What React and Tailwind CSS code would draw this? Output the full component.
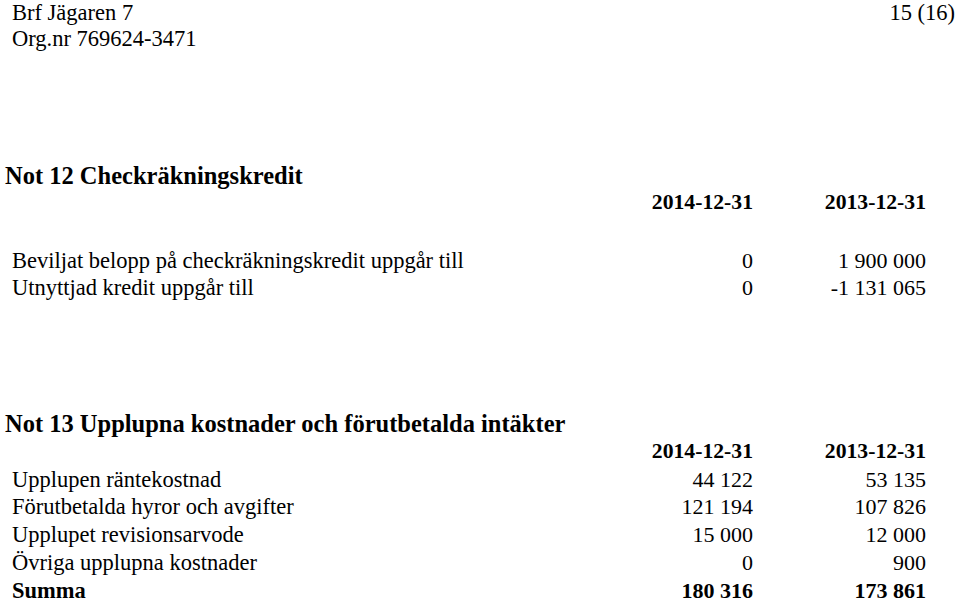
export default function App() {
  const s1 = [
    ["Beviljat belopp på checkräkningskredit uppgår till", "0", "1 900 000"],
    ["Utnyttjad kredit uppgår till", "0", "-1 131 065"],
  ];
  const s2 = [
    ["Upplupen räntekostnad", "44 122", "53 135"],
    ["Förutbetalda hyror och avgifter", "121 194", "107 826"],
    ["Upplupet revisionsarvode", "15 000", "12 000"],
    ["Övriga upplupna kostnader", "0", "900"],
  ];
  return (
    <div className="w-[959px] h-[603px] bg-white text-black overflow-hidden text-[22.5px] font-['Liberation_Serif','Times_New_Roman',serif]">
      <div className="flex justify-between pl-[12px] pr-[4px] leading-[26px]">
        <div>
          <div>Brf Jägaren 7</div>
          <div>Org.nr 769624-3471</div>
        </div>
        <div>15 (16)</div>
      </div>

      <div className="mt-[110px] leading-[27px]">
        <div className="pl-[5px] font-bold text-[24.5px]">Not 12 Checkräkningskredit</div>
        <div className="w-[926px] pl-[12px] grid grid-cols-[1fr_150px_173px] font-bold text-[21.7px]">
          <div />
          <div className="text-right">2014-12-31</div>
          <div className="text-right">2013-12-31</div>
        </div>
        <div className="mt-[31px] w-[926px] pl-[12px] grid grid-cols-[1fr_150px_173px]">
          {s1.map((r) => (
            <div key={r[0]} className="contents">
              <div>{r[0]}</div>
              <div className="text-right text-[22px]">{r[1]}</div>
              <div className="text-right text-[22px]">{r[2]}</div>
            </div>
          ))}
        </div>
      </div>

      <div className="mt-[109px] leading-[27.8px]">
        <div className="pl-[5px] font-bold text-[24.5px]">Not 13 Upplupna kostnader och förutbetalda intäkter</div>
        <div className="w-[926px] pl-[12px] grid grid-cols-[1fr_150px_173px]">
          <div />
          <div className="text-right font-bold text-[21.7px]">2014-12-31</div>
          <div className="text-right font-bold text-[21.7px]">2013-12-31</div>
          {s2.map((r) => (
            <div key={r[0]} className="contents">
              <div>{r[0]}</div>
              <div className="text-right text-[22px]">{r[1]}</div>
              <div className="text-right text-[22px]">{r[2]}</div>
            </div>
          ))}
          <div className="font-bold">Summa</div>
          <div className="text-right font-bold text-[22px]">180 316</div>
          <div className="text-right font-bold text-[22px]">173 861</div>
        </div>
      </div>
    </div>
  );
}
